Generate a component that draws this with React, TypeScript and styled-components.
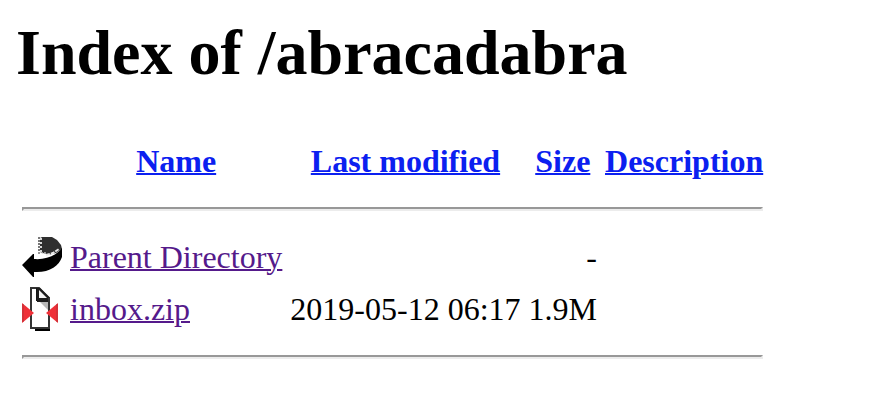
import React from "react";
import styled, { createGlobalStyle } from "styled-components";

const GlobalStyle = createGlobalStyle`
  body {
    margin: 0;
    background: #ffffff;
    color: #000000;
    font-family: "Liberation Serif", "Times New Roman", Times, serif;
    font-size: 32px;
    line-height: 36px;
  }
`;

const Page = styled.main`
  padding: 16px;
`;

const Title = styled.h1`
  margin: 0 0 43px;
  font-size: 64px;
  line-height: 74px;
  font-weight: bold;
`;

const Listing = styled.table`
  border-collapse: separate;
  border-spacing: 4px;
  white-space: nowrap;
`;

const HeadCell = styled.th`
  padding: 2px;
  font-weight: bold;
  text-align: center;
`;

const Cell = styled.td<{ $align?: "left" | "right" }>`
  padding: 2px;
  text-align: ${(p) => p.$align ?? "left"};
`;

const Rule = styled.hr`
  height: 0;
  margin: 16px 0;
  border: 2px solid;
  border-color: #989898 #ececec #ececec #989898;
`;

const Link = styled.a<{ $visited?: boolean }>`
  color: ${(p) => (p.$visited ? "#551a8b" : "#0b20f0")};
  text-decoration: underline;
  text-decoration-thickness: 2px;
`;

const Icon = styled.svg`
  display: block;
  width: 40px;
  height: 44px;
`;

const BackIcon = () => (
  <Icon viewBox="0 0 40 44" role="img" aria-label="Parent directory">
    <path d="M20 2H30L35 5L39 10L40 14L34 18L26 20L18 17V3Z" fill="#2f2f2f" />
    <path d="M17 2V17" stroke="#777777" strokeWidth="2" strokeDasharray="2 1" />
    <path d="M19 3V17" stroke="#d8d8d8" strokeWidth="2" strokeDasharray="2 2" />
    <path d="M16 18H24" stroke="#999999" strokeWidth="2" strokeDasharray="2 1" />
    <path
      d="M0 30L11 19H12V24C23 25 34 21 40 13V22C37 31 27 38 12 37V42H11Z"
      fill="#000000"
    />
    <path d="M19 18V22L25 21L24 19Z" fill="#ffffff" />
    <path d="M24 20L31 18L37 14" fill="none" stroke="#e8e8e8" strokeWidth="2" strokeDasharray="4 1" />
  </Icon>
);

const ArchiveIcon = () => (
  <Icon viewBox="0 0 40 44" role="img" aria-label="Compressed file">
    <path d="M13 40H28V44H13Z" fill="#000000" />
    <path d="M9 1H17L27 11V41H9Z" fill="#ffffff" stroke="#333333" strokeWidth="2" />
    <path d="M17 14H26V23Z" fill="#b8b8b8" />
    <path d="M15 1V13H27" fill="none" stroke="#161616" strokeWidth="2" />
    <path d="M15 1H18L28 11V15H15Z" fill="#1d1d1d" />
    <path d="M17 3L25 11H17Z" fill="#f4f4f4" />
    <path d="M27 11V42" stroke="#333333" strokeWidth="2" />
    <path d="M0 16L12 26L0 36Z" fill="#ef3038" />
    <path d="M36 16V36L24 26Z" fill="#ef3038" />
    <path d="M1 17V35M35 17V35" stroke="#b83238" />
  </Icon>
);

const columns = ["Name", "Last modified", "Size", "Description"];

const entries = [
  { name: "Parent Directory", modified: "", size: "-", icon: <BackIcon /> },
  { name: "inbox.zip", modified: "2019-05-12 06:17", size: "1.9M", icon: <ArchiveIcon /> },
];

const RuleRow = () => (
  <tr>
    <Cell colSpan={5}>
      <Rule />
    </Cell>
  </tr>
);

export default function App() {
  return (
    <Page>
      <GlobalStyle />
      <Title>Index of /abracadabra</Title>
      <Listing>
        <thead>
          <tr>
            <Cell>
              <Icon viewBox="0 0 40 44" aria-hidden="true" />
            </Cell>
            {columns.map((column) => (
              <HeadCell key={column} scope="col">
                <Link href="#">{column}</Link>
              </HeadCell>
            ))}
          </tr>
        </thead>
        <tbody>
          <RuleRow />
          {entries.map((entry) => (
            <tr key={entry.name}>
              <Cell>{entry.icon}</Cell>
              <Cell>
                <Link href="#" $visited>
                  {entry.name}
                </Link>
              </Cell>
              <Cell $align="right">{entry.modified}</Cell>
              <Cell $align="right">{entry.size}</Cell>
              <Cell />
            </tr>
          ))}
          <RuleRow />
        </tbody>
      </Listing>
    </Page>
  );
}
